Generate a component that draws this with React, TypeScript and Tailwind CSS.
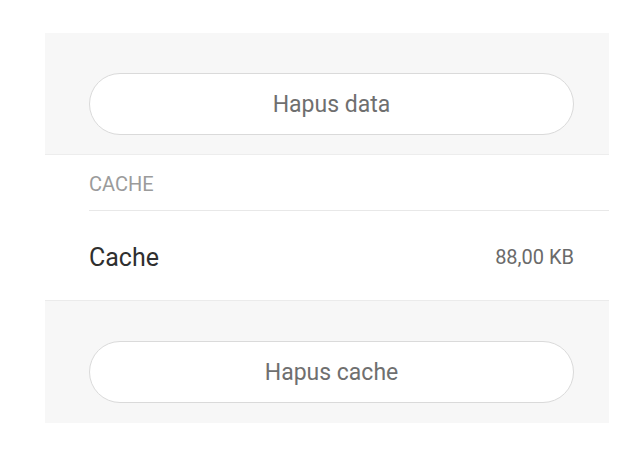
import React from 'react';

const font = { fontFamily: 'Roboto, "Noto Sans", sans-serif' };

const ActionButton: React.FC<{ label: string }> = ({ label }) => (
    <button
        type="button"
        className="w-full h-[62px] rounded-full bg-white border border-[#dadada] text-[23px] text-[#6f6f6f] flex items-center justify-center pt-[2px]"
    >
        {label}
    </button>
);

export default function App() {
    return (
        <div className="w-[642px] h-[452px] bg-white pt-[33px] pl-[45px] pr-[33px]" style={font}>
            {/* Clear data */}
            <div className="h-[122px] bg-[#f7f7f7] pt-[40px] pl-[44px] pr-[35px] border-b border-[#ededed]">
                <ActionButton label="Hapus data" />
            </div>

            {/* Cache section */}
            <div className="pl-[44px] border-b border-[#ebebeb]">
                <div className="h-[56px] flex items-center border-b border-[#e8e8e8] pt-[3px]">
                    <span className="text-[20px] text-[#9b9b9b] leading-none">CACHE</span>
                </div>
                <div className="h-[89px] flex items-center justify-between pr-[35px] pt-[3px]">
                    <span className="text-[25px] text-[#2f2f2f] leading-none">Cache</span>
                    <span className="text-[20px] text-[#6a6a6a] leading-none">88,00 KB</span>
                </div>
            </div>

            {/* Clear cache */}
            <div className="h-[122px] bg-[#f7f7f7] pt-[40px] pl-[44px] pr-[35px]">
                <ActionButton label="Hapus cache" />
            </div>
        </div>
    );
}
